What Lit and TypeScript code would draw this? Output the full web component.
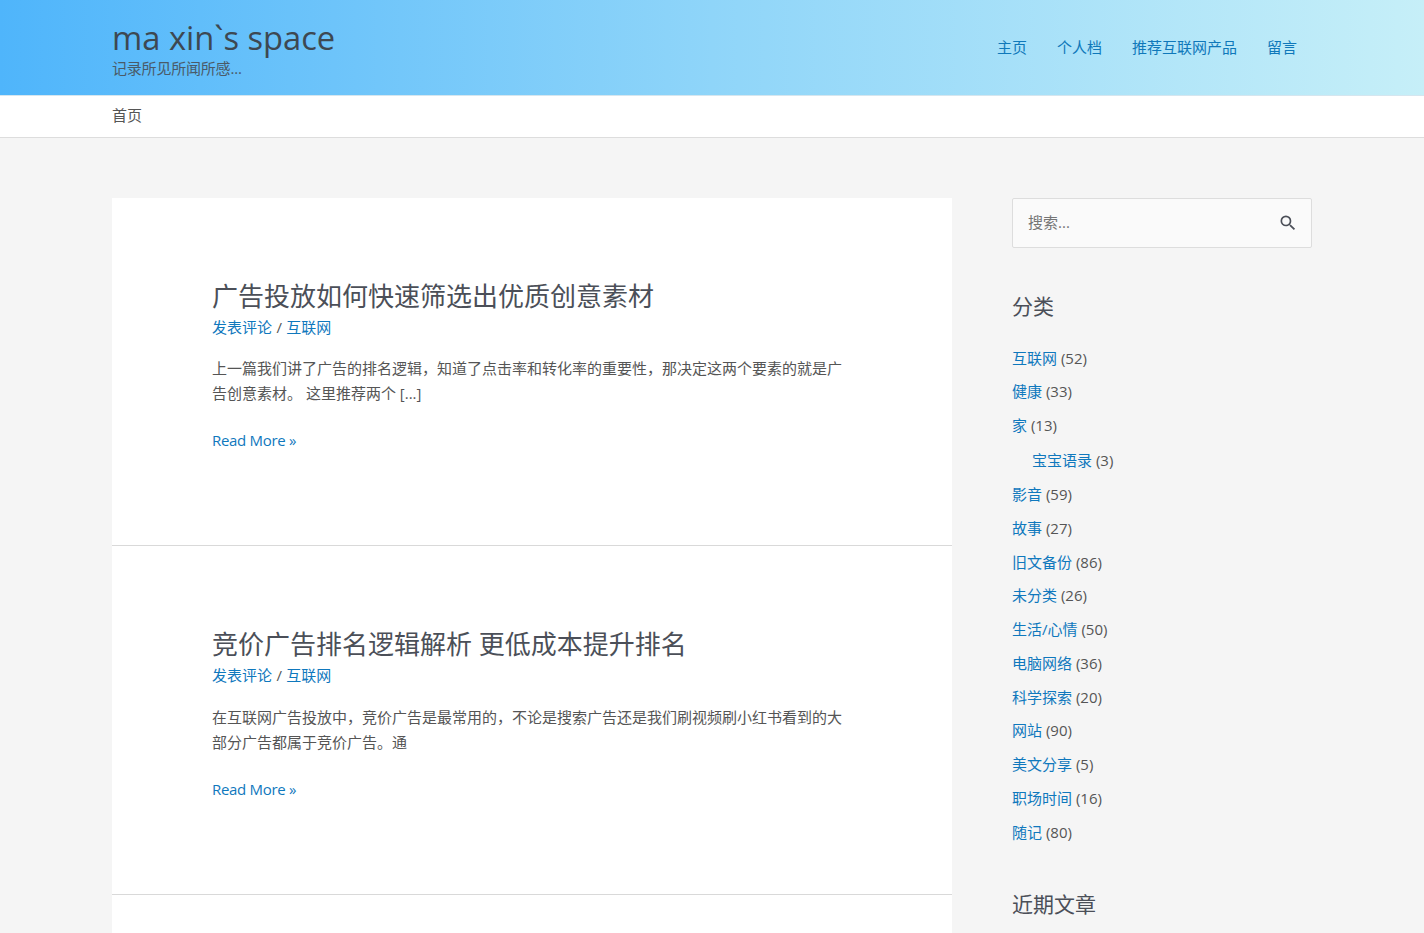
import { html, css, LitElement } from 'lit';
import { customElement } from 'lit/decorators.js';

interface Category {
  name: string;
  count: number;
  child?: boolean;
}

const NAV = ['主页', '个人档', '推荐互联网产品', '留言'];

const POSTS = [
  {
    title: '广告投放如何快速筛选出优质创意素材',
    lines: [
      '上一篇我们讲了广告的排名逻辑，知道了点击率和转化率的重要性，那决定这两个要素的就是广',
      '告创意素材。 这里推荐两个 [...]',
    ],
  },
  {
    title: '竞价广告排名逻辑解析 更低成本提升排名',
    lines: [
      '在互联网广告投放中，竞价广告是最常用的，不论是搜索广告还是我们刷视频刷小红书看到的大',
      '部分广告都属于竞价广告。通',
    ],
  },
];

const CATEGORIES: Category[] = [
  { name: '互联网', count: 52 },
  { name: '健康', count: 33 },
  { name: '家', count: 13 },
  { name: '宝宝语录', count: 3, child: true },
  { name: '影音', count: 59 },
  { name: '故事', count: 27 },
  { name: '旧文备份', count: 86 },
  { name: '未分类', count: 26 },
  { name: '生活/心情', count: 50 },
  { name: '电脑网络', count: 36 },
  { name: '科学探索', count: 20 },
  { name: '网站', count: 90 },
  { name: '美文分享', count: 5 },
  { name: '职场时间', count: 16 },
  { name: '随记', count: 80 },
];

@customElement('app-root')
export class AppRoot extends LitElement {
  static styles = css`
    :host {
      display: block;
      height: 933px;
      overflow: hidden;
      background: #f5f5f5;
      color: #555;
      font-family: 'Open Sans', 'Noto Sans CJK SC', sans-serif;
      font-size: 15px;
      line-height: 25.5px;
    }

    a {
      color: #0f78bd;
      text-decoration: none;
    }

    .container {
      width: 1200px;
      margin: 0 auto;
    }

    /* header */
    .masthead {
      height: 95px;
      background: linear-gradient(90deg, #4fb5fb 0%, #8fd5f9 50%, #c6eff8 100%);
      border-bottom: 1px solid #d5e6ef;
    }

    .masthead .container {
      display: flex;
      align-items: flex-start;
      justify-content: space-between;
    }

    .site-title {
      margin: 17px 0 0;
      font-size: 32.7px;
      line-height: 42px;
      font-weight: 400;
      color: #3d4852;
    }

    .tagline {
      margin-top: -1px;
      font-size: 15px;
      line-height: 20px;
      letter-spacing: -0.2px;
      color: #4a5a68;
    }

    .nav {
      display: flex;
      gap: 30px;
      margin: 33.5px 15px 0 0;
      line-height: 26px;
    }

    .nav a {
      color: #0f78ba;
    }

    /* breadcrumb */
    .crumbs {
      height: 41px;
      background: #fff;
      border-bottom: 1px solid #ddd;
      line-height: 39px;
    }

    /* content */
    .body {
      display: flex;
      justify-content: space-between;
      padding-top: 60px;
    }

    .main {
      width: 840px;
    }

    .post {
      box-sizing: border-box;
      height: 348.25px;
      padding: 80px 100px 0;
      background: #fff;
      border-bottom: 1px solid #d9d9d9;
    }

    .post h2 {
      margin: 0;
      font-size: 26px;
      line-height: 36px;
      font-weight: 400;
      color: #4b4f58;
    }

    .meta {
      line-height: 26px;
      word-spacing: 0.5px;
    }

    .excerpt {
      margin: 16.4px 0 0;
      line-height: 25px;
      white-space: pre-line;
    }

    .more {
      display: block;
      margin-top: 22px;
      letter-spacing: -0.3px;
    }

    .stub {
      height: 60px;
      background: #fff;
    }

    /* sidebar */
    .side {
      width: 300px;
    }

    .search {
      box-sizing: border-box;
      display: flex;
      align-items: center;
      justify-content: space-between;
      height: 50px;
      padding: 0 15px;
      background: #fafafa;
      border: 1px solid #ddd;
      border-radius: 2px;
      color: #757575;
    }

    .search svg {
      display: block;
      width: 20px;
      height: 20px;
      margin-right: -2px;
    }

    .side-title {
      margin: 43px 0 0;
      font-size: 21px;
      line-height: 30px;
      font-weight: 400;
      color: #4b4f58;
    }

    .cats {
      list-style: none;
      margin: 23.6px 0 0;
      padding: 0;
    }

    .cats li {
      height: 33.75px;
      line-height: 26px;
    }

    .cats li.child {
      padding-left: 20px;
      height: 34.3px;
      margin-top: 1px;
    }

    .side-title.recent {
      margin-top: 37px;
    }
  `;

  render() {
    return html`
      <header class="masthead">
        <div class="container">
          <div>
            <h1 class="site-title">ma xin\`s space</h1>
            <div class="tagline">记录所见所闻所感...</div>
          </div>
          <nav class="nav">${NAV.map((item) => html`<a href="#">${item}</a>`)}</nav>
        </div>
      </header>
      <div class="crumbs"><div class="container">首页</div></div>
      <div class="container body">
        <main class="main">
          ${POSTS.map(
            (post) => html`
              <article class="post">
                <h2>${post.title}</h2>
                <div class="meta"><a href="#">发表评论</a> / <a href="#">互联网</a></div>
                <p class="excerpt">${post.lines.join('\n')}</p>
                <a class="more" href="#">Read More »</a>
              </article>
            `,
          )}
          <div class="stub"></div>
        </main>
        <aside class="side">
          <div class="search">
            <span>搜索...</span>
            <svg viewBox="0 0 24 24" fill="#4b4f58" aria-hidden="true">
              <path
                d="M15.5 14h-.79l-.28-.27A6.47 6.47 0 0 0 16 9.5 6.5 6.5 0 1 0 9.5 16c1.61 0 3.09-.59 4.23-1.57l.27.28v.79l5 4.99L20.49 19l-4.99-5zm-6 0C7.01 14 5 11.99 5 9.5S7.01 5 9.5 5 14 7.01 14 9.5 11.99 14 9.5 14z"
              ></path>
            </svg>
          </div>
          <h3 class="side-title">分类</h3>
          <ul class="cats">
            ${CATEGORIES.map(
              (cat) => html`
                <li class=${cat.child ? 'child' : ''}><a href="#">${cat.name}</a> (${cat.count})</li>
              `,
            )}
          </ul>
          <h3 class="side-title recent">近期文章</h3>
        </aside>
      </div>
    `;
  }
}
